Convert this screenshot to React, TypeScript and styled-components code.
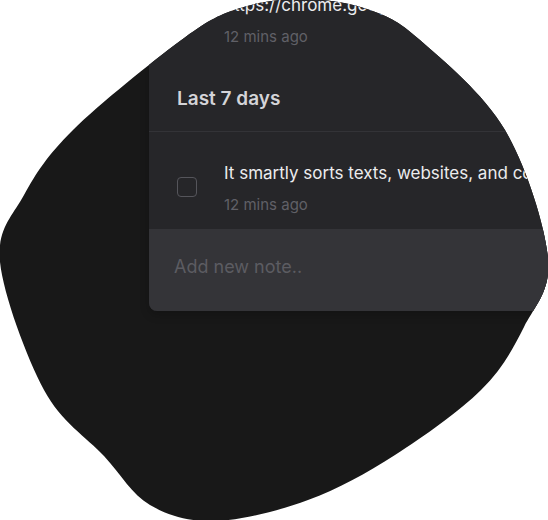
import React from "react";
import styled, { createGlobalStyle } from "styled-components";

// outline of the blob, traced from the reference, smoothed with catmull-rom
const blobPoints: [number, number][] = [
  [301, -1], [367, 9], [420, 40], [505, 130], [548, 258], [524, 327],
  [481, 390], [395, 455], [308, 500], [215, 521], [150, 505], [104, 456],
  [44, 390], [0, 262], [24, 195], [73, 130], [180, 41], [237, 9],
];

function smoothPath(pts: [number, number][]) {
  const n = pts.length;
  const f = (v: number) => v.toFixed(1);
  let d = `M ${pts[0][0]} ${pts[0][1]}`;
  for (let i = 0; i < n; i++) {
    const p0 = pts[(i - 1 + n) % n];
    const p1 = pts[i];
    const p2 = pts[(i + 1) % n];
    const p3 = pts[(i + 2) % n];
    const c1x = p1[0] + (p2[0] - p0[0]) / 6;
    const c1y = p1[1] + (p2[1] - p0[1]) / 6;
    const c2x = p2[0] - (p3[0] - p1[0]) / 6;
    const c2y = p2[1] - (p3[1] - p1[1]) / 6;
    d += ` C ${f(c1x)} ${f(c1y)}, ${f(c2x)} ${f(c2y)}, ${p2[0]} ${p2[1]}`;
  }
  return d + " Z";
}

const blobPath = smoothPath(blobPoints);

const GlobalStyle = createGlobalStyle`
  html, body {
    margin: 0;
    background: #ffffff;
    font-family: Inter, "Noto Sans", sans-serif;
  }
`;

const Stage = styled.div<{ $shape: string }>`
  width: 548px;
  height: 520px;
  box-sizing: border-box;
  padding-left: 149px;
  background: #181818;
  overflow: hidden;
  clip-path: path('${(p) => p.$shape}');
`;

const Card = styled.div`
  width: 480px;
  margin-top: -36px;
  background: #262629;
  border-bottom-left-radius: 8px;
  overflow: hidden;
  box-shadow: 0 4px 10px rgba(0, 0, 0, 0.2);
`;

const NoteRow = styled.div<{ $divider?: boolean }>`
  display: flex;
  align-items: center;
  gap: 27px;
  padding: 30px 28px 13px;
  border-bottom: ${(p) => (p.$divider ? "1px solid #333337" : "none")};
`;

const Check = styled.span`
  flex: none;
  width: 20px;
  height: 20px;
  box-sizing: border-box;
  border: 1.5px solid #55555b;
  border-radius: 4px;
  margin-top: -4px;
`;

const NoteBody = styled.div`
  display: flex;
  flex-direction: column;
  gap: 10px;
  min-width: 0;
`;

const NoteTitle = styled.div`
  font-size: 17px;
  line-height: 22px;
  color: #ececee;
  white-space: nowrap;
`;

const NoteTime = styled.div`
  font-size: 15px;
  line-height: 22px;
  color: #606067;
`;

const SectionTitle = styled.div`
  padding: 26px 28px 20px;
  font-size: 19px;
  line-height: 24px;
  font-weight: 600;
  color: #d4d4d8;
  border-bottom: 1px solid #333337;
`;

const Composer = styled.div`
  padding: 26px 25px 32px;
  background: #343438;
`;

const ComposerInput = styled.input`
  display: block;
  width: 100%;
  height: 24px;
  padding: 0;
  border: none;
  outline: none;
  background: transparent;
  font-family: inherit;
  font-size: 18px;
  line-height: 24px;
  color: #ececee;

  &::placeholder {
    color: #5c5c62;
  }
`;

type Note = { text: string; time: string };

const notes: Note[] = [
  { text: "https://chrome.google.com/webstore", time: "12 mins ago" },
  { text: "It smartly sorts texts, websites, and code", time: "12 mins ago" },
];

function NoteItem({ note, divider }: { note: Note; divider?: boolean }) {
  return (
    <NoteRow $divider={divider}>
      <Check />
      <NoteBody>
        <NoteTitle>{note.text}</NoteTitle>
        <NoteTime>{note.time}</NoteTime>
      </NoteBody>
    </NoteRow>
  );
}

export default function App() {
  return (
    <>
      <GlobalStyle />
      <Stage $shape={blobPath}>
        <Card>
          <NoteItem note={notes[0]} />
          <SectionTitle>Last 7 days</SectionTitle>
          <NoteItem note={notes[1]} />
          <Composer>
            <ComposerInput placeholder="Add new note.." />
          </Composer>
        </Card>
      </Stage>
    </>
  );
}
